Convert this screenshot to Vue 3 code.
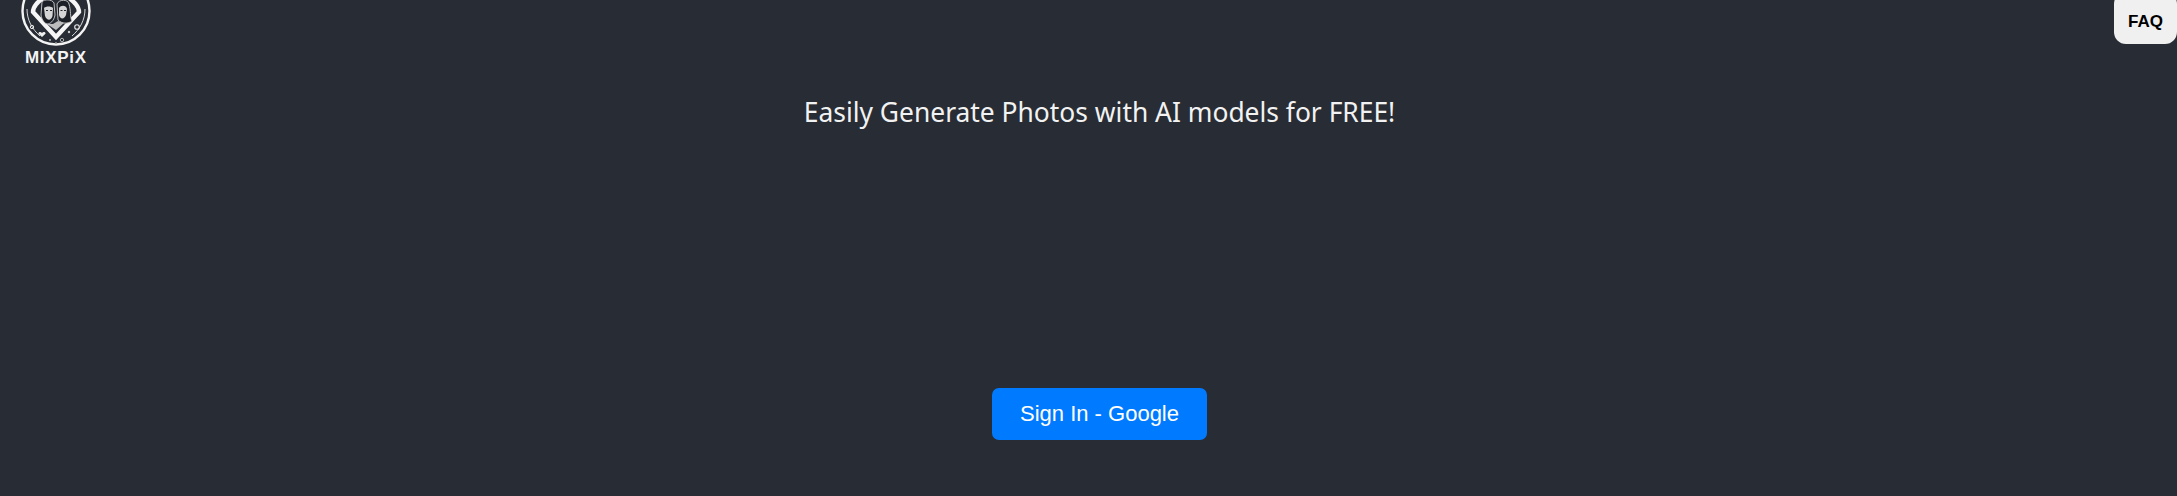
<script setup>
</script>

<template>
  <div class="page">
    <div class="logo">
      <svg class="mark" viewBox="0 0 110 48" width="110" height="48" aria-hidden="true">
        <circle cx="56" cy="11" r="33.5" fill="none" stroke="#f4f4f4" stroke-width="2.4" />
        <path d="M27 9 C27 20 32 29 40 36" fill="none" stroke="#d8d8d8" stroke-width="1" />
        <path d="M85 9 C85 20 80 29 72 36" fill="none" stroke="#d8d8d8" stroke-width="1" />
        <path d="M44 -3 C38 2 33 6 33 12 L56 37 L79 12 C79 6 74 2 68 -3" fill="#282c34" stroke="#f6f6f6" stroke-width="4.4" stroke-linejoin="miter" />
        <path d="M42 2 C44 -1 52 -1 54 3 L55 15 C54 21 50 24 47 24 C44 23 42 20 41 15 Z" fill="#1c1f25" stroke="#cfcfcf" stroke-width="0.9" />
        <path d="M44 8 C46 6 51 6 53 8 L52.5 16 C51 21 47 21 45 16 Z" fill="#d4d4d4" />
        <path d="M57 4 C59 -1 68 -1 69 4 C71 10 70 18 72 21 C68 24 62 24 58 20 Z" fill="#1c1f25" stroke="#cfcfcf" stroke-width="0.9" />
        <path d="M59 8 C61 5 66 5 67 9 L66 15 C64 20 60 19 59 15 Z" fill="#d4d4d4" />
        <path d="M46 10.5 h2 M50 10.5 h2 M60.5 10.5 h2 M64 10.5 h2" stroke="#23262c" stroke-width="1.2" />
        <path d="M47 24 L56 30 L64 23 L58 21 L53 24 Z" fill="#bcbcbc" />
        <circle cx="32" cy="27" r="1.7" fill="none" stroke="#e8e8e8" stroke-width="1" />
        <circle cx="77" cy="27" r="2.3" fill="none" stroke="#e8e8e8" stroke-width="1.1" />
        <path d="M42 37 L38.5 33.8 C38 32 40.8 31.4 42 33 C43.2 31.4 46 32 45.5 33.8 Z" fill="#efefef" />
        <circle cx="50" cy="40" r="1" fill="#bdbdbd" />
        <circle cx="56" cy="43" r="0.9" fill="#a8a8a8" />
        <circle cx="62" cy="40" r="1.7" fill="none" stroke="#bdbdbd" stroke-width="0.9" />
        <circle cx="69" cy="32" r="1.2" fill="#c8c8c8" />
      </svg>
      <div class="brand">MIXPiX</div>
    </div>
    <button class="faq">FAQ</button>
    <main class="content">
      <h1 class="title">Easily Generate Photos with AI models for FREE!</h1>
      <button class="signin">Sign In - Google</button>
    </main>
  </div>
</template>

<style scoped>
.page { width: 2177px; height: 496px; background: #282c34; overflow: hidden; position: relative; }
.logo { position: absolute; left: 0; top: 0; width: 110px; height: 70px; }
.mark { display: block; }
.brand { position: absolute; left: 25px; top: 48px; font: 700 17px "Liberation Sans", sans-serif; letter-spacing: 0.7px; color: #f4f4f4; }
.faq { position: absolute; right: 0; top: -8px; width: 63px; height: 52px; border: 0; border-radius: 12px; background: #f0f0f0; color: #000; font: 700 17px "Liberation Sans", sans-serif; padding: 8px 0 0; }
.content { display: flex; flex-direction: column; align-items: center; padding: 94px 0 0 22px; }
.title { margin: 0; font: 400 26.4px "Noto Sans", sans-serif; color: #f2f2f2; }
.signin { margin-top: 258px; width: 215px; height: 52px; border: 0; border-radius: 7px; background: #007bff; color: #fff; font: 400 22px "Liberation Sans", sans-serif; padding: 0; }
</style>

<style>
html, body { margin: 0; background: #282c34; }
</style>
